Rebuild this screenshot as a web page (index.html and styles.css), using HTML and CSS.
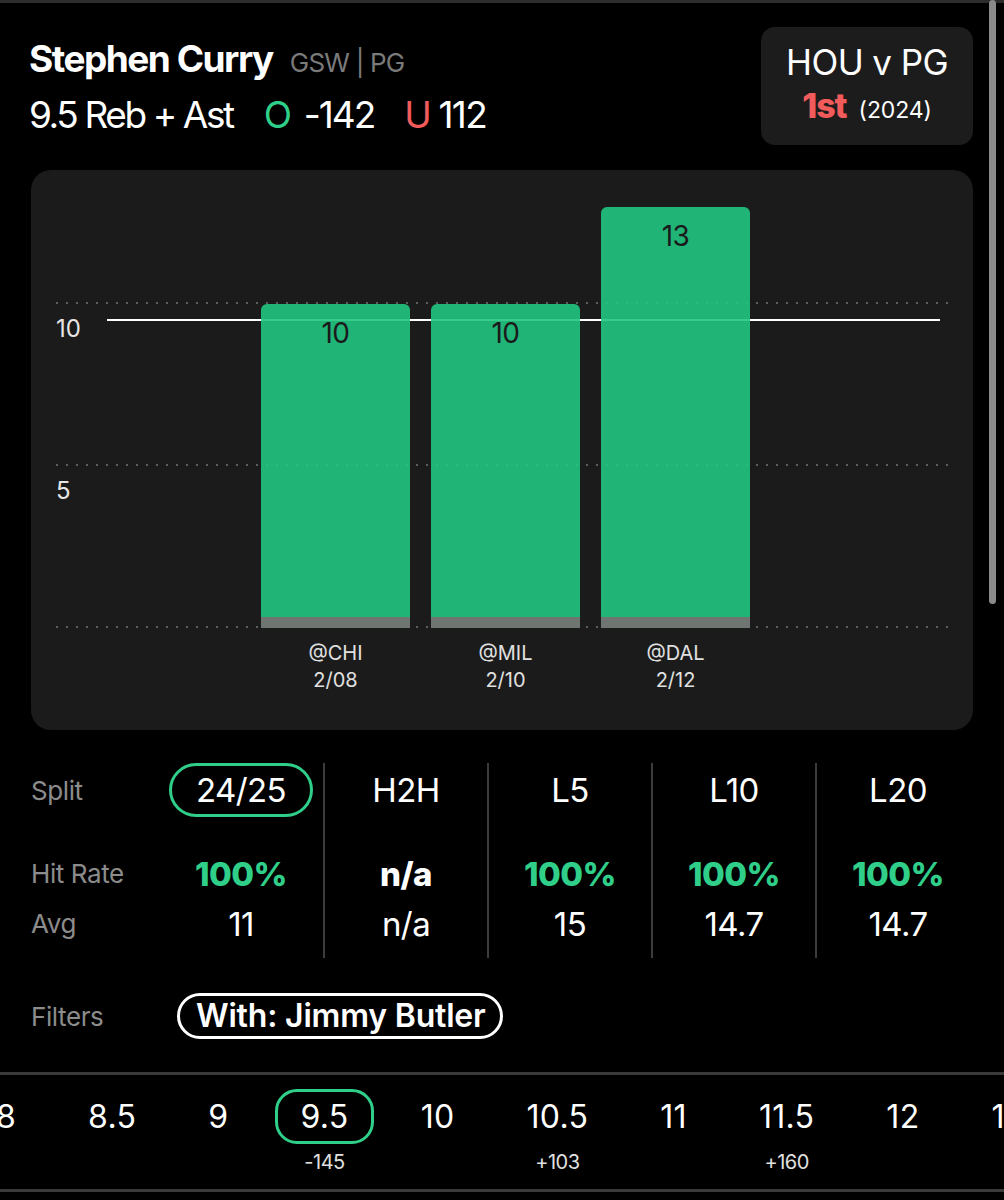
FILE: index.html
```html
<!DOCTYPE html>
<html lang="en">
<head>
    <meta charset="UTF-8">
    <meta name="viewport" content="width=device-width, initial-scale=1.0">
    <title>Stephen Curry - Reb + Ast</title>
    <link rel="stylesheet" href="styles.css">
</head>
<body>
    <div class="topbar"></div>
    <div class="scrollbar"></div>

    <div class="page">
        <div class="header">
            <div class="player">
                <div class="name-line">
                    <span class="name">Stephen Curry</span>
                    <span class="team">GSW | PG</span>
                </div>
                <div class="prop-line">
                    <span>9.5 Reb + Ast</span>
                    <span class="over">O</span><span class="odds">-142</span>
                    <span class="under">U</span><span class="odds-u">112</span>
                </div>
            </div>
            <div class="matchup">
                <div class="matchup-title">HOU v PG</div>
                <div class="matchup-rank"><span class="rank">1st</span><span class="year">(2024)</span></div>
            </div>
        </div>

        <div class="chart-card">
            <div class="plot">
                <div class="grid-line dotted" style="bottom: 324px;"></div>
                <div class="axis-label" style="top: 137px;">10</div>
                <div class="grid-line dotted" style="bottom: 162px;"></div>
                <div class="axis-label" style="top: 299px;">5</div>
                <div class="grid-line dotted" style="bottom: 0px;"></div>
                <div class="grid-line solid" style="bottom: 307px;"></div>

                <div class="bars">
                    <div class="bar" style="height: 324px;"><span class="bar-value">10</span><span class="bar-base"></span></div>
                    <div class="bar" style="height: 324px;"><span class="bar-value">10</span><span class="bar-base"></span></div>
                    <div class="bar" style="height: 421px;"><span class="bar-value">13</span><span class="bar-base"></span></div>
                </div>
            </div>
            <div class="x-labels">
                <div class="x-label">@CHI<br>2/08</div>
                <div class="x-label">@MIL<br>2/10</div>
                <div class="x-label">@DAL<br>2/12</div>
            </div>
        </div>

        <div class="stats">
            <div class="stat-col labels">
                <div class="cell head">Split</div>
                <div class="cell rate">Hit Rate</div>
                <div class="cell avg">Avg</div>
            </div>
            <div class="stat-col">
                <div class="cell head"><span class="split-pill">24/25</span></div>
                <div class="cell rate green">100%</div>
                <div class="cell avg">11</div>
            </div>
            <div class="stat-col divided">
                <div class="cell head">H2H</div>
                <div class="cell rate">n/a</div>
                <div class="cell avg">n/a</div>
            </div>
            <div class="stat-col divided">
                <div class="cell head">L5</div>
                <div class="cell rate green">100%</div>
                <div class="cell avg">15</div>
            </div>
            <div class="stat-col divided">
                <div class="cell head">L10</div>
                <div class="cell rate green">100%</div>
                <div class="cell avg">14.7</div>
            </div>
            <div class="stat-col divided">
                <div class="cell head">L20</div>
                <div class="cell rate green">100%</div>
                <div class="cell avg">14.7</div>
            </div>
        </div>

        <div class="filters">
            <span class="filters-label">Filters</span>
            <span class="filter-pill">With: Jimmy Butler</span>
        </div>
    </div>

    <div class="lines-strip">
        <div class="lines">
            <div class="line-item"><span class="line-num">8</span><span class="line-odds"></span></div>
            <div class="line-item"><span class="line-num">8.5</span><span class="line-odds"></span></div>
            <div class="line-item"><span class="line-num">9</span><span class="line-odds"></span></div>
            <div class="line-item selected"><span class="line-num">9.5</span><span class="line-odds">-145</span></div>
            <div class="line-item"><span class="line-num">10</span><span class="line-odds"></span></div>
            <div class="line-item"><span class="line-num">10.5</span><span class="line-odds">+103</span></div>
            <div class="line-item"><span class="line-num">11</span><span class="line-odds"></span></div>
            <div class="line-item"><span class="line-num">11.5</span><span class="line-odds">+160</span></div>
            <div class="line-item"><span class="line-num">12</span><span class="line-odds"></span></div>
            <div class="line-item"><span class="line-num">12.5</span><span class="line-odds">+2</span></div>
        </div>
    </div>
</body>
</html>
```

FILE: styles.css
```css
body { margin: 0; background: #000; color: #fff; font-family: Inter, "Noto Sans", sans-serif; overflow: hidden; }
.topbar { height: 3px; background: #2c2c2c; }
.scrollbar { position: absolute; top: 0; left: 989px; width: 7px; height: 604px; background: #8a8a8a; border-radius: 4px; }

.page { padding: 0 31px; }

.header { display: flex; justify-content: space-between; align-items: flex-start; padding-top: 24px; }
.player { margin-top: 8px; margin-left: -2px; }
.name-line, .prop-line { display: flex; align-items: baseline; white-space: nowrap; }
.name-line { line-height: 48px; }
.prop-line { line-height: 55px; font-size: 37px; letter-spacing: -2.4px; }
.name { font-size: 37px; font-weight: 700; letter-spacing: -1.5px; }
.team { font-size: 26px; color: #7a7a7a; letter-spacing: -0.8px; margin-left: 17px; }
.over { color: #2fcf8a; margin-left: 31px; }
.odds { margin-left: 14px; letter-spacing: -2px; }
.under { color: #f25b5b; margin-left: 30px; }
.odds-u { margin-left: 9px; letter-spacing: -1.6px; }

.matchup { width: 212px; height: 118px; box-sizing: border-box; background: #1c1c1c; border-radius: 14px; text-align: center; padding-top: 15px; }
.matchup-title { font-size: 35px; line-height: 40px; letter-spacing: -0.6px; }
.matchup-rank { line-height: 48px; }
.rank { font-size: 34px; font-weight: 800; color: #f25b5b; letter-spacing: -1px; }
.year { font-size: 23px; margin-left: 12px; letter-spacing: -0.1px; }

.chart-card { margin-top: 25px; height: 560px; box-sizing: border-box; background: #1b1b1b; border-radius: 20px; padding: 10px 25px 0; }
.plot { position: relative; height: 448px; }
.grid-line { position: absolute; left: 0; right: 0; height: 2px; }
.dotted { background-image: linear-gradient(to right, #5e5e5e 2px, transparent 2px); background-size: 10px 2px; }
.solid { left: 51px; right: 8px; background: #fff; }
.axis-label { position: absolute; left: 0; font-size: 24px; line-height: 24px; color: #e6e6e6; }

.bars { position: relative; display: flex; align-items: flex-end; gap: 21px; height: 100%; padding-left: 205px; }
.bar { width: 149px; display: flex; flex-direction: column; justify-content: space-between; align-items: center; background: rgba(34, 197, 130, 0.9); border-radius: 6px 6px 0 0; }
.bar-value { font-size: 28px; line-height: 28px; color: #1a1a1a; margin-top: 15px; letter-spacing: -0.5px; }
.bar-base { align-self: stretch; height: 11px; background: #6f7672; }

.x-labels { display: flex; gap: 21px; padding-left: 205px; margin-top: 12px; }
.x-label { width: 149px; text-align: center; font-size: 20px; line-height: 27px; color: #e0e0e0; }

.stats { display: grid; grid-template-columns: 128px repeat(5, 164px); margin-top: 33px; }
.stat-col { display: flex; flex-direction: column; align-items: center; padding-bottom: 10px; }
.stat-col.labels { align-items: flex-start; }
.divided { border-left: 2px solid #3c3c3c; }
.cell { font-size: 33px; letter-spacing: -0.6px; }
.labels .cell { font-size: 26px; color: #8c8c8c; letter-spacing: -0.4px; }
.head { height: 54px; display: flex; align-items: center; }
.rate { height: 48px; line-height: 48px; margin-top: 33px; }
.avg { height: 48px; line-height: 48px; margin-top: 2px; }
.stat-col .rate { font-weight: 800; }
.labels .rate { font-weight: 400; }
.green { color: #2fcf8a; }
.split-pill { display: inline-block; width: 144px; height: 54px; box-sizing: border-box; border: 3px solid #2fcf8a; border-radius: 27px; text-align: center; line-height: 48px; }

.filters { display: flex; align-items: center; margin-top: 35px; height: 46px; }
.filters-label { width: 146px; font-size: 26px; color: #8c8c8c; letter-spacing: -0.4px; }
.filter-pill { height: 46px; box-sizing: border-box; border: 3px solid #fff; border-radius: 23px; padding: 0 14px 0 16px; font-size: 32px; font-weight: 600; line-height: 39px; letter-spacing: -0.2px; }

.lines-strip { margin-top: 33px; border-top: 3px solid #3a3a3a; border-bottom: 3px solid #3a3a3a; height: 114px; overflow: hidden; }
.lines { display: flex; gap: 22px; margin-left: -29px; padding-top: 14px; }
.line-item { display: flex; flex-direction: column; align-items: center; }
.line-num { height: 55px; box-sizing: border-box; border: 3px solid transparent; border-radius: 22px; padding: 0 22px; font-size: 32px; line-height: 49px; letter-spacing: 0.3px; white-space: nowrap; }
.selected .line-num { border-color: #2fcf8a; }
.line-odds { font-size: 20px; line-height: 24px; margin-top: 6px; color: #e0e0e0; letter-spacing: -0.5px; }
```
